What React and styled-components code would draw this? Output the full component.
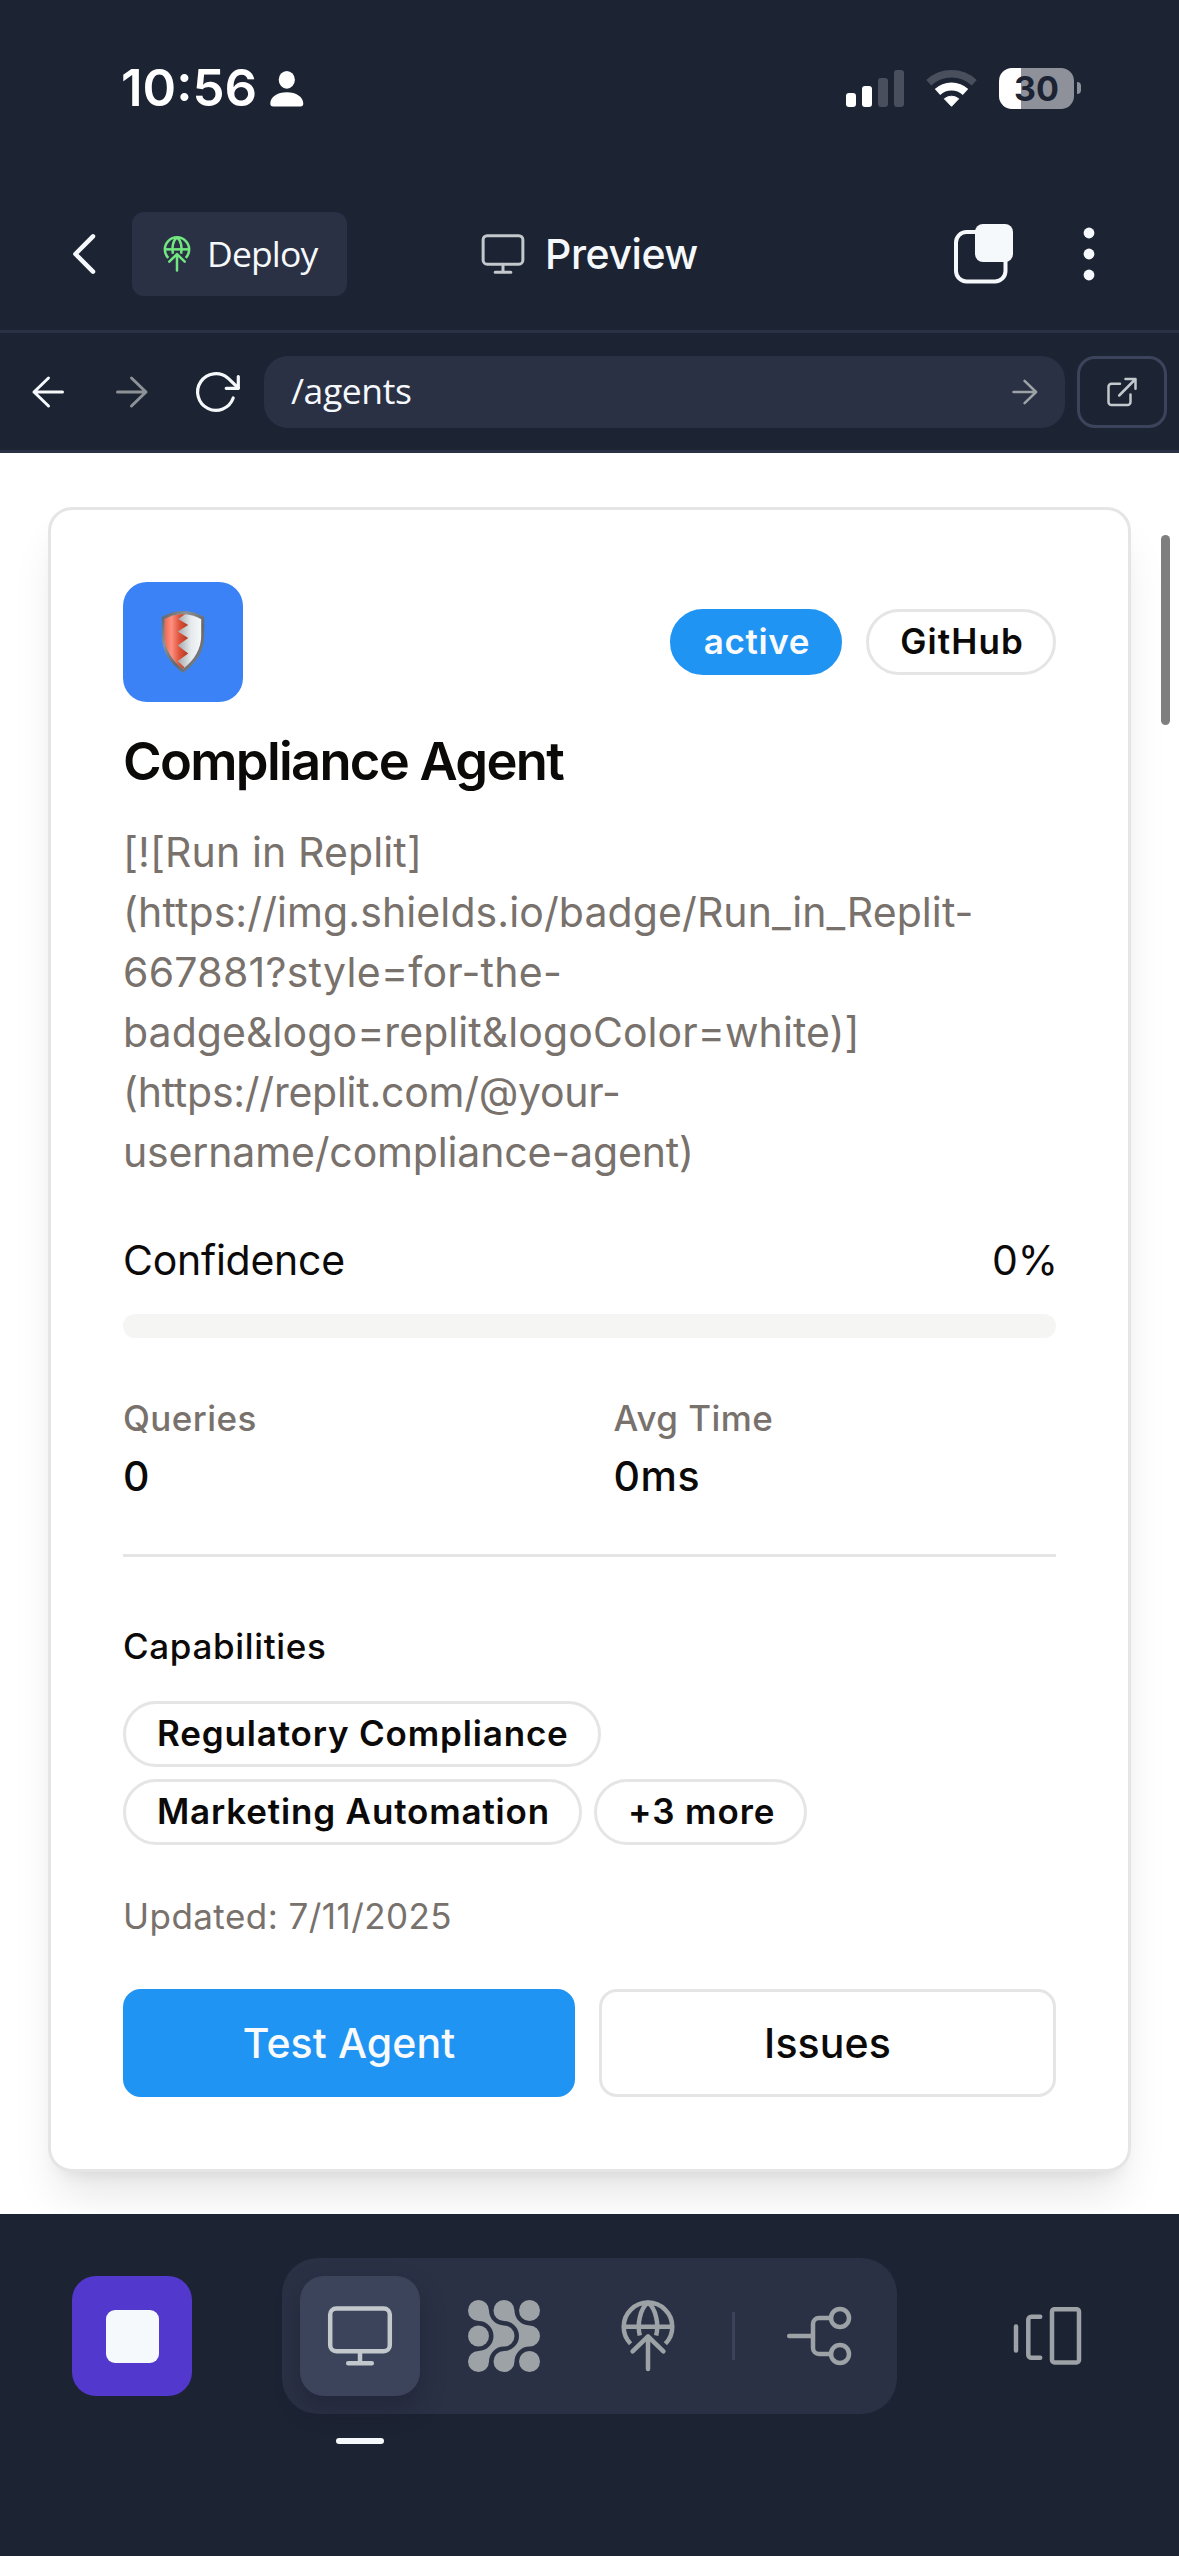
import React from "react";
import styled, { createGlobalStyle, css } from "styled-components";

const c = {
  root: "#1c2333",
  raised: "#2b3145",
  raisedHigh: "#3c445c",
  fg: "#f5f9fc",
  fgDim: "#c2c8cc",
  fgDimmer: "#9da2a6",
  ink: "#0c0a09",
  muted: "#78716c",
  line: "#e5e5e5",
  blue: "#2094f3",
  purple: "#5238cc",
  green: "#72e780",
};

const sans = `Inter, "Liberation Sans", sans-serif`;
const humanist = `"Open Sans", "Noto Sans", sans-serif`;

const GlobalStyle = createGlobalStyle`
  * { box-sizing: border-box; }
  body { margin: 0; background: ${c.root}; font-family: ${sans}; }
  button { font: inherit; border: 0; padding: 0; background: none; color: inherit; }
  h2, p, dl, dd, dt, h3 { margin: 0; font: inherit; }
  svg { display: block; flex: none; overflow: visible; }
`;

const Screen = styled.div`
  width: 1179px;
  height: 2556px;
  display: flex;
  flex-direction: column;
  background: ${c.root};
  color: ${c.fg};
  overflow: hidden;
`;

/* ---------- status bar ---------- */

const StatusBar = styled.header`
  height: 178px;
  padding: 0 98px 2px 121px;
  display: flex;
  align-items: center;
  justify-content: space-between;
  color: #fff;
`;

const StatusGroup = styled.div`
  display: flex;
  align-items: center;
  gap: ${(p) => p.$gap}px;
`;

const Clock = styled.span`
  font-size: 51px;
  font-weight: 600;
  line-height: 60px;
`;

const Battery = styled.span`
  display: flex;
  align-items: center;
  gap: 3px;
`;

const BatteryBody = styled.span`
  width: 75px;
  height: 41px;
  border-radius: 13px;
  display: flex;
  align-items: center;
  justify-content: center;
  background: linear-gradient(90deg, #fff 30%, #8e919a 30%);
  color: ${c.root};
  font-size: 34px;
  font-weight: 700;
  line-height: 41px;
`;

const BatteryTip = styled.span`
  width: 4px;
  height: 12px;
  border-radius: 0 6px 6px 0;
  background: #8e919a;
`;

/* ---------- app header ---------- */

const Header = styled.div`
  height: 155px;
  border-bottom: 3px solid ${c.raised};
  display: grid;
  grid-template-columns: 1fr auto 1fr;
  align-items: center;
`;

const HeaderLeft = styled.div`
  display: flex;
  align-items: center;
  gap: 30px;
  padding-left: 66px;
`;

const DeployButton = styled.button`
  width: 215px;
  height: 84px;
  padding: 0 0 0 27px;
  display: flex;
  align-items: center;
  gap: 12px;
  border-radius: 12px;
  background: ${c.raised};
  color: ${c.green};
`;

const DeployLabel = styled.span`
  padding-bottom: 3px;
  color: ${c.fg};
  font-family: ${humanist};
  font-size: 35.5px;
  letter-spacing: -0.85px;
`;

const HeaderTitle = styled.div`
  display: flex;
  align-items: center;
  gap: 18px;
  padding-right: 2px;
  color: ${c.fgDim};
`;

const TitleText = styled.span`
  color: ${c.fg};
  font-size: 41px;
  font-weight: 500;
  letter-spacing: -0.45px;
  line-height: 60px;
`;

const HeaderRight = styled.div`
  display: flex;
  align-items: center;
  justify-content: flex-end;
  gap: 69px;
  padding-right: 84px;
`;

/* ---------- address bar ---------- */

const BrowserBar = styled.nav`
  height: 120px;
  padding: 23px 12px 22px 24px;
  border-bottom: 3px solid ${c.raised};
  display: flex;
  align-items: center;
`;

const NavButtons = styled.div`
  display: flex;
  gap: 36px;
  margin-right: 24px;
`;

const NavButton = styled.button`
  color: ${(p) => (p.$disabled ? "#8d9297" : c.fg)};
`;

const UrlField = styled.div`
  flex: 1;
  height: 72px;
  padding: 0 21px 0 27px;
  border-radius: 24px;
  background: ${c.raised};
  color: ${c.fgDimmer};
  display: flex;
  align-items: center;
  justify-content: space-between;
`;

const UrlText = styled.span`
  padding-bottom: 4px;
  color: ${c.fg};
  font-family: ${humanist};
  font-size: 35.5px;
  letter-spacing: -0.4px;
`;

const OpenButton = styled.button`
  width: 90px;
  height: 72px;
  margin-left: 12px;
  border: 3px solid ${c.raisedHigh};
  border-radius: 18px;
  display: flex;
  align-items: center;
  justify-content: center;
  color: ${c.fgDim};
`;

/* ---------- page ---------- */

const Viewport = styled.main`
  position: relative;
  height: 1761px;
  padding: 54px 48px 0;
  background: #fff;
  color: ${c.ink};
  overflow: hidden;
`;

const Scrollbar = styled.div`
  position: absolute;
  top: 82px;
  right: 9px;
  width: 9px;
  height: 190px;
  border-radius: 5px;
  background: #7f7f7f;
`;

const Card = styled.article`
  height: 1665px;
  padding: 72px;
  border: 3px solid ${c.line};
  border-radius: 24px;
  background: #fff;
  box-shadow: 0 30px 45px -9px rgba(0, 0, 0, 0.1), 0 12px 18px -12px rgba(0, 0, 0, 0.1);
`;

const CardTop = styled.div`
  display: flex;
  align-items: center;
  justify-content: space-between;
`;

const Avatar = styled.div`
  width: 120px;
  height: 120px;
  border-radius: 24px;
  background: #3b82f6;
  display: flex;
  align-items: center;
  justify-content: center;
`;

const PillRow = styled.div`
  display: flex;
  flex-wrap: wrap;
  gap: ${(p) => p.$gap || 12}px;
  margin-top: ${(p) => p.$top || 0}px;
`;

const Pill = styled.span`
  height: 66px;
  padding: 0 29px 0 31px;
  border: 3px solid ${c.line};
  border-radius: 33px;
  font-size: 35px;
  font-weight: 600;
  line-height: 59px;
  letter-spacing: ${(p) => p.$tracking || 0.83}px;
  white-space: nowrap;
  ${(p) =>
    p.$solid &&
    css`
      border-color: ${c.blue};
      background: ${c.blue};
      color: #f8fafc;
    `}
`;

const AgentName = styled.h2`
  margin-top: 23px;
  font-size: 52.5px;
  font-weight: 600;
  line-height: 72px;
  letter-spacing: -1.7px;
`;

const Description = styled.p`
  margin-top: 25px;
  color: ${c.muted};
  font-size: 41px;
  line-height: 60px;
`;

const DescriptionLine = styled.span`
  display: block;
  white-space: nowrap;
  letter-spacing: ${(p) => p.$tracking}px;
`;

const ConfidenceRow = styled.div`
  margin-top: 48px;
  display: flex;
  justify-content: space-between;
  font-size: 41px;
  line-height: 60px;
  letter-spacing: -0.25px;
`;

const Percent = styled.span`
  margin-right: -2px;
  letter-spacing: 0;
`;

const Track = styled.div`
  height: 24px;
  margin-top: 24px;
  border-radius: 12px;
  background: #f5f5f4;
`;

const Stats = styled.dl`
  height: 219px;
  padding-top: 56px;
  border-bottom: 3px solid ${c.line};
  display: grid;
  grid-template-columns: 1fr 1fr;
  column-gap: 48px;
`;

const StatLabel = styled.dt`
  color: ${c.muted};
  font-size: 35px;
  font-weight: 500;
  line-height: 48px;
  letter-spacing: 0.45px;
`;

const StatValue = styled.dd`
  margin-top: 4px;
  font-size: 41px;
  font-weight: 500;
  line-height: 60px;
  letter-spacing: 0.6px;
`;

const SectionTitle = styled.h3`
  margin-top: 65px;
  font-size: 35px;
  font-weight: 500;
  line-height: 48px;
  letter-spacing: 0.65px;
`;

const Updated = styled.p`
  margin-top: 47px;
  color: ${c.muted};
  font-size: 35px;
  line-height: 48px;
  letter-spacing: 0.45px;
`;

const Actions = styled.div`
  margin-top: 49px;
  display: grid;
  grid-template-columns: 452px 1fr;
  gap: 24px;
`;

const ActionButton = styled.button`
  height: 108px;
  border: 3px solid ${(p) => (p.$primary ? c.blue : c.line)};
  border-radius: 18px;
  background: ${(p) => (p.$primary ? c.blue : "#fff")};
  color: ${(p) => (p.$primary ? "#f8fafc" : c.ink)};
  font-size: 41px;
  font-weight: 500;
  line-height: 60px;
  letter-spacing: 0.1px;
`;

/* ---------- bottom dock ---------- */

const Dock = styled.footer`
  flex: 1;
  padding: 44px 72px 0;
  display: flex;
  align-items: flex-start;
`;

const dockItem = css`
  width: 120px;
  height: 120px;
  border-radius: 24px;
  display: flex;
  align-items: center;
  justify-content: center;
`;

const StopButton = styled.button`
  ${dockItem}
  margin: 18px 90px 0 0;
  background: ${c.purple};
`;

const StopGlyph = styled.span`
  width: 53px;
  height: 53px;
  border-radius: 9px;
  background: ${c.fg};
`;

const TabGroup = styled.div`
  height: 156px;
  padding: 18px;
  border-radius: 36px;
  background: ${c.raised};
  display: flex;
  align-items: center;
  gap: 24px;
`;

const Tab = styled.button`
  ${dockItem}
  position: relative;
  color: ${c.fgDimmer};
  ${(p) =>
    p.$active &&
    css`
      background: ${c.raisedHigh};
      color: ${c.fgDim};
      box-shadow: 0 12px 24px rgba(20, 24, 42, 0.38);
    `}
`;

const ActiveMark = styled.span`
  position: absolute;
  left: 36px;
  bottom: -48px;
  width: 48px;
  height: 6px;
  border-radius: 3px;
  background: ${c.fg};
`;

const Divider = styled.span`
  width: 3px;
  height: 48px;
  background: ${c.raisedHigh};
`;

const StackButton = styled.button`
  ${dockItem}
  margin: 18px 0 0 auto;
  color: ${c.fgDimmer};
`;

/* ---------- icons ---------- */

const stroke = (width) => ({
  fill: "none",
  stroke: "currentColor",
  strokeWidth: width,
  strokeLinecap: "round",
  strokeLinejoin: "round",
});

const PersonIcon = () => (
  <svg width="34" height="37" viewBox="0 0 34 37" fill="currentColor">
    <ellipse cx="16.8" cy="9.8" rx="8.1" ry="8.9" />
    <path d="M.3 33.6C.3 27 7.4 22.3 16.8 22.3S33.3 27 33.3 33.6c0 2-.8 3-3 3H3.300c-2.200 0-3-1-3-3z" />
  </svg>
);

const SignalIcon = () => (
  <svg width="58" height="37" viewBox="0 0 58 37" fill="#fff">
    <rect x="0" y="23" width="10" height="14" rx="3" />
    <rect x="16" y="16" width="10" height="21" rx="3" />
    <rect x="32" y="8" width="10" height="29" rx="3" fill="#4a4f5e" />
    <rect x="48" y="0" width="10" height="37" rx="3" fill="#4a4f5e" />
  </svg>
);

const WifiIcon = () => (
  <svg width="51" height="37" viewBox="0 0 51 37" fill="none">
    <path d="M2.800 12.700A33.300 33.300 0 0 1 48.200 12.700" stroke="#4a4f5e" strokeWidth="7.400" />
    <path d="M11.500 22A20.500 20.500 0 0 1 39.500 22" stroke="#fff" strokeWidth="8" />
    <path d="M18.300 28.800A11.300 11.300 0 0 1 32.700 28.800L25.500 36.300Z" fill="#fff" stroke="#fff" strokeWidth="1" strokeLinejoin="round" />
  </svg>
);

const ChevronIcon = () => (
  <svg width="36" height="48" viewBox="0 0 36 48" {...stroke(4.5)}>
    <path d="M27 6.300L9.400 24 27 41.700" />
  </svg>
);

const DeployIcon = ({ size, weight = 4.5 }) => (
  <svg width={size} height={size} viewBox="0 0 72 72" {...stroke(weight)} strokeLinecap="butt">
    <path d="M18.600 43.800A24.300 24.300 0 1 1 53.400 43.800" />
    <path d="M12 26.700H60" />
    <path d="M27.800 35.500C25 24 28 9 36 2.600C44 9 47 24 44.200 35.500" />
    <path d="M20.600 51.400L36 36.300 51.400 51.400M36 37V69" strokeLinecap="round" />
  </svg>
);

const MonitorIcon = ({ size, weight = 4.5 }) => (
  <svg width={size} height={size} viewBox="0 0 72 72" {...stroke(weight)}>
    <rect x="6.200" y="8.500" width="59.600" height="42.700" rx="6" />
    <path d="M36 51.200V63.200M24.200 63.200H47.800" />
  </svg>
);

const WindowsIcon = () => (
  <svg width="60" height="60" viewBox="0 0 60 60">
    <rect x="2" y="8" width="49.500" height="49.500" rx="10.500" {...stroke(4)} />
    <rect x="21" y="0" width="38" height="38" rx="8" fill="currentColor" />
  </svg>
);

const DotsIcon = () => (
  <svg width="12" height="54" viewBox="0 0 12 54" fill="currentColor">
    <circle cx="6" cy="6" r="5.400" />
    <circle cx="6" cy="27" r="5.400" />
    <circle cx="6" cy="48" r="5.400" />
  </svg>
);

const ArrowLeftIcon = () => (
  <svg width="48" height="48" viewBox="0 0 48 48" {...stroke(3)}>
    <path d="M38.500 24H10M24.500 10L10 24 24.500 38" />
  </svg>
);

const ArrowRightIcon = ({ size = 48, weight = 3 }) => (
  <svg width={size} height={size} viewBox="0 0 48 48" {...stroke(weight)}>
    <path d="M9.500 24H38M23.500 10L38 24 23.500 38" />
  </svg>
);

const ReloadIcon = () => (
  <svg width="48" height="48" viewBox="0 0 48 48" {...stroke(3.2)}>
    <path d="M41.200 30A18.300 18.300 0 1 1 36 10.200L46.300 20" />
    <path d="M46.300 8.500V20.300H34.200" />
  </svg>
);

const ExternalIcon = () => (
  <svg width="30" height="30" viewBox="0 0 30 30" {...stroke(2.5)}>
    <path d="M13 6.800H4.500a3 3 0 0 0-3 3V25a3 3 0 0 0 3 3H20.500a3 3 0 0 0 3-3V17.500" />
    <path d="M12.200 18.500L28.500 2M18.500 2H28.500V11.800" />
  </svg>
);

const GridIcon = () => {
  const flow =
    "M21 10.500A15 15 0 0 0 36 25.500A10.500 10.500 0 0 1 36 46.500A15 15 0 0 0 21 61.500A10.500 10.500 0 1 1 10.500 51A15 15 0 0 0 10.500 21A10.500 10.500 0 1 1 21 10.500Z";
  return (
    <svg width="72" height="72" viewBox="0 0 72 72" fill="currentColor">
      <path d={flow} />
      <path d={flow} transform="translate(25.500 0)" />
      <circle cx="10.500" cy="36" r="10.500" />
      <circle cx="61.500" cy="10.500" r="10.500" />
      <circle cx="61.500" cy="61.500" r="10.500" />
    </svg>
  );
};

const BranchIcon = () => (
  <svg width="72" height="72" viewBox="0 0 72 72" {...stroke(4.5)}>
    <circle cx="57" cy="18" r="9" />
    <circle cx="57" cy="54" r="9" />
    <path d="M48 18H36a6 6 0 0 0-6 6V48a6 6 0 0 0 6 6H48M6.200 36H30" />
  </svg>
);

const StackIcon = () => (
  <svg width="72" height="72" viewBox="0 0 72 72" {...stroke(4.5)}>
    <path d="M5 26.500V50.500M29.200 16.700H20.300a3 3 0 0 0-3 3V54.700a3 3 0 0 0 3 3H29.200" />
    <rect x="41" y="9.200" width="27" height="53.300" rx="2.500" />
  </svg>
);

const ShieldIcon = () => (
  <svg width="44" height="62" viewBox="0 0 42 62" preserveAspectRatio="none">
    <defs>
      <linearGradient id="rim" x1="0" y1="0" x2="1" y2="1">
        <stop offset="0" stopColor="#5c6063" />
        <stop offset=".3" stopColor="#8d9194" />
        <stop offset=".6" stopColor="#65696c" />
        <stop offset="1" stopColor="#84888b" />
      </linearGradient>
      <linearGradient id="silver" gradientUnits="userSpaceOnUse" x1="16" y1="0" x2="39" y2="0">
        <stop offset="0" stopColor="#a3a8ab" />
        <stop offset=".55" stopColor="#e6eaed" />
        <stop offset="1" stopColor="#f7f9fa" />
      </linearGradient>
      <linearGradient id="red" gradientUnits="userSpaceOnUse" x1="3" y1="0" x2="26" y2="0">
        <stop offset="0" stopColor="#f2614c" />
        <stop offset=".3" stopColor="#ff9180" />
        <stop offset=".65" stopColor="#dc5038" />
        <stop offset="1" stopColor="#ad3b22" />
      </linearGradient>
      <clipPath id="face">
        <path d="M21 3.200C15 3.200 9 5 3.600 8.200V24C3.600 38 10 49 21 57.800C32 49 38.400 38 38.400 24V8.200C33 5 27 3.200 21 3.200Z" />
      </clipPath>
    </defs>
    <path d="M21 0C14 0 7 2 .7 6V24C.7 40 8 52 21 61.700C34 52 41.300 40 41.300 24V6C35 2 28 0 21 0Z" fill="url(#rim)" />
    <g clipPath="url(#face)">
      <rect width="42" height="62" fill="url(#silver)" />
      <path d="M0 0H24L22.600 3.500 16.500 8 26 14 16 20.500 26 27 16 34.500 26 42.500 16 50 22 56V62H0Z" fill="url(#red)" />
    </g>
  </svg>
);

const description = [
  ["[![Run in Replit]", 0.13],
  ["(https://img.shields.io/badge/Run_in_Replit-", 0.1],
  ["667881?style=for-the-", 0.26],
  ["badge&logo=replit&logoColor=white)]", 0.08],
  ["(https://replit.com/@your-", -0.25],
  ["username/compliance-agent)", -0.15],
];

export default function App() {
  return (
    <Screen>
      <GlobalStyle />
      <StatusBar>
        <StatusGroup $gap={13}>
          <Clock>10:56</Clock>
          <PersonIcon />
        </StatusGroup>
        <StatusGroup $gap={22}>
          <SignalIcon />
          <WifiIcon />
          <Battery>
            <BatteryBody>30</BatteryBody>
            <BatteryTip />
          </Battery>
        </StatusGroup>
      </StatusBar>

      <Header>
        <HeaderLeft>
          <ChevronIcon />
          <DeployButton>
            <DeployIcon size={36} weight={5} />
            <DeployLabel>Deploy</DeployLabel>
          </DeployButton>
        </HeaderLeft>
        <HeaderTitle>
          <MonitorIcon size={48} />
          <TitleText>Preview</TitleText>
        </HeaderTitle>
        <HeaderRight>
          <WindowsIcon />
          <DotsIcon />
        </HeaderRight>
      </Header>

      <BrowserBar>
        <NavButtons>
          <NavButton aria-label="Back"><ArrowLeftIcon /></NavButton>
          <NavButton aria-label="Forward" $disabled><ArrowRightIcon /></NavButton>
          <NavButton aria-label="Reload"><ReloadIcon /></NavButton>
        </NavButtons>
        <UrlField>
          <UrlText>/agents</UrlText>
          <ArrowRightIcon size={38} weight={3.2} />
        </UrlField>
        <OpenButton aria-label="Open in new tab"><ExternalIcon /></OpenButton>
      </BrowserBar>

      <Viewport>
        <Card>
          <CardTop>
            <Avatar><ShieldIcon /></Avatar>
            <PillRow $gap={24}>
              <Pill $solid $tracking={0.65}>active</Pill>
              <Pill $tracking={1.1}>GitHub</Pill>
            </PillRow>
          </CardTop>
          <AgentName>Compliance Agent</AgentName>
          <Description>
            {description.map(([text, tracking]) => (
              <DescriptionLine key={text} $tracking={tracking}>{text}</DescriptionLine>
            ))}
          </Description>
          <ConfidenceRow>
            <span>Confidence</span>
            <Percent>0%</Percent>
          </ConfidenceRow>
          <Track />
          <Stats>
            <div>
              <StatLabel>Queries</StatLabel>
              <StatValue>0</StatValue>
            </div>
            <div>
              <StatLabel>Avg Time</StatLabel>
              <StatValue>0ms</StatValue>
            </div>
          </Stats>
          <SectionTitle>Capabilities</SectionTitle>
          <PillRow $top={31}>
            <Pill>Regulatory Compliance</Pill>
            <Pill>Marketing Automation</Pill>
            <Pill $tracking={0.9}>+3 more</Pill>
          </PillRow>
          <Updated>Updated: 7/11/2025</Updated>
          <Actions>
            <ActionButton $primary>Test Agent</ActionButton>
            <ActionButton>Issues</ActionButton>
          </Actions>
        </Card>
        <Scrollbar />
      </Viewport>

      <Dock>
        <StopButton aria-label="Stop"><StopGlyph /></StopButton>
        <TabGroup>
          <Tab $active aria-label="Preview">
            <MonitorIcon size={72} />
            <ActiveMark />
          </Tab>
          <Tab aria-label="Agent"><GridIcon /></Tab>
          <Tab aria-label="Deployments"><DeployIcon size={72} /></Tab>
          <Divider />
          <Tab aria-label="Version control"><BranchIcon /></Tab>
        </TabGroup>
        <StackButton aria-label="Tabs"><StackIcon /></StackButton>
      </Dock>
    </Screen>
  );
}
